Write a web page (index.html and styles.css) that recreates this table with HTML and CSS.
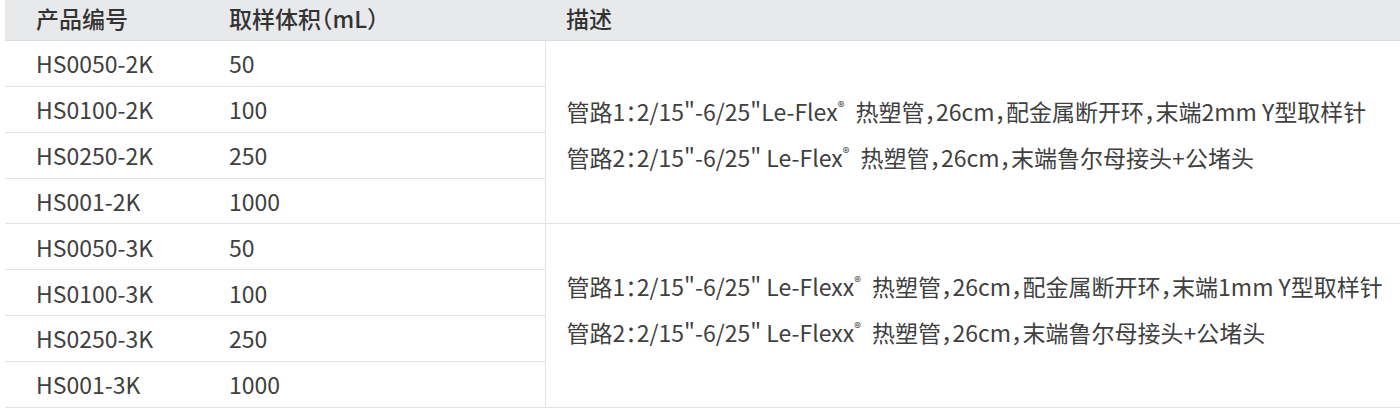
FILE: index.html
```html
<!DOCTYPE html>
<html lang="zh-CN">
<head>
<meta charset="utf-8">
<link rel="stylesheet" href="styles.css">
</head>
<body>
<div class="wrap">
<table class="spec">
  <thead>
    <tr><th class="c1">产品编号</th><th class="c2">取样体积（mL）</th><th class="c3">描述</th></tr>
  </thead>
  <tbody>
    <tr><td class="c1">HS0050-2K</td><td class="c2">50</td>
      <td class="c3 upper" rowspan="4"><p>管路1：2/15"-6/25"Le-Flex<sup>®</sup> 热塑管，26cm，配金属断开环，末端2mm Y型取样针</p><p>管路2：2/15"-6/25" Le-Flex<sup>®</sup> 热塑管，26cm，末端鲁尔母接头+公堵头</p></td></tr>
    <tr><td class="c1">HS0100-2K</td><td class="c2">100</td></tr>
    <tr><td class="c1">HS0250-2K</td><td class="c2">250</td></tr>
    <tr><td class="c1">HS001-2K</td><td class="c2">1000</td></tr>
    <tr><td class="c1">HS0050-3K</td><td class="c2">50</td>
      <td class="c3 lower" rowspan="4"><p>管路1：2/15"-6/25" Le-Flexx<sup>®</sup> 热塑管，26cm，配金属断开环，末端1mm Y型取样针</p><p>管路2：2/15"-6/25" Le-Flexx<sup>®</sup> 热塑管，26cm，末端鲁尔母接头+公堵头</p></td></tr>
    <tr><td class="c1">HS0100-3K</td><td class="c2">100</td></tr>
    <tr><td class="c1">HS0250-3K</td><td class="c2">250</td></tr>
    <tr><td class="c1">HS001-3K</td><td class="c2">1000</td></tr>
  </tbody>
</table>
</div>
</body>
</html>
```
FILE: styles.css
```css
html, body {
  margin: 0;
  padding: 0;
  background: #fff;
}
.wrap {
  padding-left: 5px;
  overflow: hidden;
}
.spec {
  width: 1395px;
  border-collapse: collapse;
  table-layout: fixed;
  font-family: "Noto Sans CJK SC", "Noto Sans", sans-serif;
  font-feature-settings: "halt" 1;
  color: #404040;
  font-size: 23px;
}
.spec th {
  background: #e8e9eb;
  height: 35px;
  padding: 0 0 5px 0;
  text-align: left;
  font-weight: 500;
  font-size: 23px;
  color: #333;
  border-bottom: 1px solid #dcdcdc;
  vertical-align: middle;
}
.spec td {
  height: 44.85px;
  padding: 0;
  text-align: left;
  vertical-align: middle;
  border-bottom: 1px solid #e2e2e2;
}
.spec .c1 { width: 162px; padding-left: 31px; }
.spec .c2 { width: 316px; padding-left: 31px; }
.spec .c3 { padding-left: 21px; }
.spec td.c3 { border-left: 1px solid #e2e2e2; }
.spec td.upper { padding-top: 3px; }
.spec td.lower { padding-bottom: 14px; }
.spec p {
  margin: 0;
  line-height: 46px;
  white-space: nowrap;
}
.spec sup {
  font-size: 14px;
  vertical-align: 9px;
  line-height: 0;
  margin-right: 6px;
}
```
